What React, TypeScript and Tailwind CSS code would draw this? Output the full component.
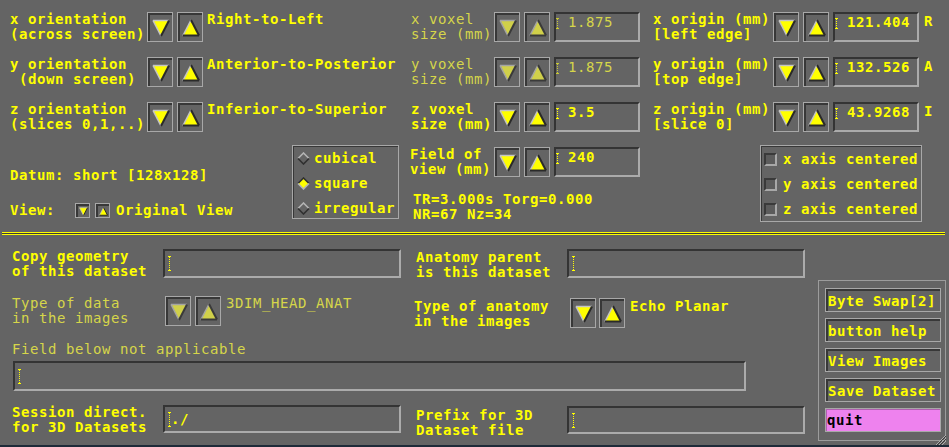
import React from "react";

const YEL = "#ffff00";
const DIM = "font-normal text-[#d6d64a]";

function Tri({ dir, dim = false, size = 18 }: { dir: "up" | "down"; dim?: boolean; size?: number }) {
  const fill = dim ? "#d0d04a" : YEL;
  const light = dim ? "#a4a4a4" : "#c4c4c4";
  const dark = dim ? "#3a3a3a" : "#2a2a2a";
  return (
    <svg width={size} height={size} viewBox="0 0 18 18" className="block">
      {dir === "down" ? (
        <>
          <polygon points="1,1.5 17,1.5 9,17" fill={fill} />
          <line x1="1" y1="1.5" x2="17" y2="1.5" stroke={light} strokeWidth="1.5" />
          <line x1="1" y1="1.5" x2="9" y2="17" stroke={light} strokeWidth="1.5" />
          <line x1="17" y1="1.5" x2="9" y2="17" stroke={dark} strokeWidth="2" />
        </>
      ) : (
        <>
          <polygon points="9,1 17,16.5 1,16.5" fill={fill} />
          <line x1="9" y1="1" x2="1" y2="16.5" stroke={light} strokeWidth="1.5" />
          <line x1="9" y1="1" x2="17" y2="16.5" stroke={dark} strokeWidth="2" />
          <line x1="1" y1="16.5" x2="17" y2="16.5" stroke={dark} strokeWidth="2" />
        </>
      )}
    </svg>
  );
}

function ArrowBtn({ dir, dim = false, small = false }: { dir: "up" | "down"; dim?: boolean; small?: boolean }) {
  return (
    <div
      className={`${small ? "w-[15px] h-[15px]" : "w-[26px] h-[30px]"} shrink-0 border border-[#a8a8a8] bg-[#646464]`}
    >
      <div className="w-full h-full border-t-2 border-l-2 border-[#383838] flex items-center justify-center">
        <Tri dir={dir} dim={dim} size={small ? 9 : 18} />
      </div>
    </div>
  );
}

function Cursor({ h = 11, dim = false }: { h?: number; dim?: boolean }) {
  const c = dim ? "#c8c832" : YEL;
  return (
    <svg width="3" height={h} viewBox={`0 0 3 ${h}`} className="block shrink-0">
      <line x1="0" y1="0.5" x2="3" y2="0.5" stroke={c} strokeWidth="1" />
      <line x1="1.5" y1="1" x2="1.5" y2={h - 1} stroke={c} strokeWidth="1" strokeDasharray="1 1" />
      <line x1="0" y1={h - 0.5} x2="3" y2={h - 0.5} stroke={c} strokeWidth="1" />
    </svg>
  );
}

function NumField({ text, dim = false, w = "w-[86px]" }: { text: string; dim?: boolean; w?: string }) {
  return (
    <div
      className={`${w} h-[30px] shrink-0 border-2 border-t-[#343434] border-l-[#343434] border-b-[#ababab] border-r-[#ababab] flex items-start pt-[1px]`}
    >
      <div className="mt-[3px]">
        <Cursor h={11} dim={dim} />
      </div>
      <span className={`ml-[9px] whitespace-pre ${dim ? DIM : ""}`}>{text}</span>
    </div>
  );
}

function TextField({ text = "", w, h = "h-[29px]" }: { text?: string; w: string; h?: string }) {
  return (
    <div
      className={`${w} ${h} shrink-0 border-2 border-t-[#343434] border-l-[#343434] border-b-[#ababab] border-r-[#ababab] flex items-center pl-[3px]`}
    >
      <Cursor h={15} />
      <span className="whitespace-pre">{text}</span>
    </div>
  );
}

function TopRow(p: {
  a1: string;
  a2: string;
  val: string;
  b1: string;
  b2: string;
  bDim: boolean;
  bVal: string;
  c1: string;
  c2: string;
  cVal: string;
  letter: string;
}) {
  return (
    <div className="h-[45px] shrink-0 flex items-start">
      <div className="ml-[10px] w-[137px] whitespace-pre">
        {p.a1}
        <br />
        {p.a2}
      </div>
      <div className="flex gap-[4px]">
        <ArrowBtn dir="down" />
        <ArrowBtn dir="up" />
      </div>
      <div className="ml-[4px] w-[204px] whitespace-pre">{p.val}</div>
      <div className={`w-[83px] whitespace-pre ${p.bDim ? DIM : ""}`}>
        {p.b1}
        <br />
        {p.b2}
      </div>
      <div className="flex gap-[4px]">
        <ArrowBtn dir="down" dim={p.bDim} />
        <ArrowBtn dir="up" dim={p.bDim} />
      </div>
      <div className="ml-[4px]">
        <NumField text={p.bVal} dim={p.bDim} />
      </div>
      <div className="ml-[13px] w-[120px] whitespace-pre">
        {p.c1}
        <br />
        {p.c2}
      </div>
      <div className="flex gap-[4px]">
        <ArrowBtn dir="down" />
        <ArrowBtn dir="up" />
      </div>
      <div className="ml-[4px]">
        <NumField text={p.cVal} />
      </div>
      <div className="ml-[5px] pt-[2px]">{p.letter}</div>
    </div>
  );
}

function Diamond({ on }: { on: boolean }) {
  const tl = on ? "#303030" : "#b4b4b4";
  const br = on ? "#b4b4b4" : "#303030";
  return (
    <svg width="13" height="13" viewBox="0 0 13 13" className="block shrink-0">
      <polygon points="6.5,1 12,6.5 6.5,12 1,6.5" fill={on ? YEL : "#646464"} />
      <polyline points="1,6.5 6.5,1 12,6.5" fill="none" stroke={tl} strokeWidth="1.6" />
      <polyline points="1,6.5 6.5,12 12,6.5" fill="none" stroke={br} strokeWidth="1.6" />
    </svg>
  );
}

function CheckBox() {
  return (
    <div className="w-[13px] h-[13px] shrink-0 border-2 border-t-[#3a3a3a] border-l-[#3a3a3a] border-b-[#a8a8a8] border-r-[#a8a8a8] bg-[#5c5c5c]" />
  );
}

function PanelBtn({ label, quit = false }: { label: string; quit?: boolean }) {
  return (
    <div className={`w-[116px] h-[24px] shrink-0 border border-[#a8a8a8] ${quit ? "bg-[#ee82ee]" : ""}`}>
      <div
        className={`w-full h-full flex items-center whitespace-pre ${
          quit ? "text-black border-t border-l border-[#b060b0]" : "border-t-2 border-l-2 border-[#383838]"
        }`}
      >
        {label}
      </div>
    </div>
  );
}

export default function App() {
  return (
    <div className="relative w-[949px] h-[447px] overflow-hidden bg-[#646464] text-[#ffff00] font-[family-name:'DejaVu_Sans_Mono','Liberation_Mono',monospace] font-bold text-[14px] tracking-[0.57px] leading-[15px]">
      {/* top rows */}
      <div className="h-[145px] pt-[12px] flex flex-col">
        <TopRow
          a1="x orientation"
          a2="(across screen)"
          val="Right-to-Left"
          b1="x voxel"
          b2="size (mm)"
          bDim
          bVal="1.875"
          c1="x origin (mm)"
          c2="[left edge]"
          cVal="121.404"
          letter="R"
        />
        <TopRow
          a1="y orientation"
          a2=" (down screen)"
          val="Anterior-to-Posterior"
          b1="y voxel"
          b2="size (mm)"
          bDim
          bVal="1.875"
          c1="y origin (mm)"
          c2="[top edge]"
          cVal="132.526"
          letter="A"
        />
        <TopRow
          a1="z orientation"
          a2="(slices 0,1,..)"
          val="Inferior-to-Superior"
          b1="z voxel"
          b2="size (mm)"
          bDim={false}
          bVal="3.5"
          c1="z origin (mm)"
          c2="[slice 0]"
          cVal="43.9268"
          letter="I"
        />
      </div>

      {/* middle */}
      <div className="h-[87px] flex items-start">
        <div className="w-[292px] shrink-0 pl-[10px] pt-[23px] flex flex-col">
          <div className="whitespace-pre">Datum: short [128x128]</div>
          <div className="mt-[20px] flex items-center h-[15px]">
            <span className="w-[65px] shrink-0">View:</span>
            <ArrowBtn small dir="down" />
            <div className="w-[5px]" />
            <ArrowBtn small dir="up" />
            <span className="ml-[6px] whitespace-pre">Original View</span>
          </div>
        </div>
        <div className="w-[107px] h-[74px] shrink-0 border border-[#a8a8a8]">
          <div className="w-full h-full border-t border-l border-[#383838] flex flex-col pt-[4px] pl-[3px] gap-[10px]">
            <div className="h-[15px] flex items-center gap-[4px]">
              <Diamond on={false} />
              <span>cubical</span>
            </div>
            <div className="h-[15px] flex items-center gap-[4px]">
              <Diamond on />
              <span>square</span>
            </div>
            <div className="h-[15px] flex items-center gap-[4px]">
              <Diamond on={false} />
              <span>irregular</span>
            </div>
          </div>
        </div>
        <div className="ml-[11px] mt-[2px] flex flex-col">
          <div className="flex items-start">
            <div className="w-[84px] whitespace-pre">
              Field of
              <br />
              view (mm)
            </div>
            <div className="flex gap-[4px]">
              <ArrowBtn dir="down" />
              <ArrowBtn dir="up" />
            </div>
            <div className="ml-[4px]">
              <NumField text="240" />
            </div>
          </div>
          <div className="mt-[15px] ml-[3px] whitespace-pre">
            TR=3.000s Torg=0.000
            <br />
            NR=67 Nz=34
          </div>
        </div>
        <div className="ml-[120px] w-[162px] h-[77px] shrink-0 border border-[#a8a8a8]">
          <div className="w-full h-full border-t border-l border-[#383838] flex flex-col pt-[5px] pl-[2px] gap-[10px]">
            {["x axis centered", "y axis centered", "z axis centered"].map((t) => (
              <div key={t} className="h-[15px] flex items-center gap-[6px]">
                <CheckBox />
                <span className="whitespace-pre">{t}</span>
              </div>
            ))}
          </div>
        </div>
      </div>

      {/* separator */}
      <div className="h-[5px] ml-[2px] w-[943px] flex flex-col">
        <div className="h-[1px] bg-[#ffff00]" />
        <div className="h-[1px] bg-[#3c3c3c]" />
        <div className="h-[1px] bg-[#ffff00]" />
      </div>

      {/* lower */}
      <div className="h-[208px] flex items-start">
        <div className="w-[812px] shrink-0 flex flex-col">
          <div className="mt-[12px] flex items-start">
            <div className="ml-[12px] w-[151px] whitespace-pre">
              Copy geometry
              <br />
              of this dataset
            </div>
            <TextField w="w-[238px]" />
            <div className="ml-[15px] w-[151px] whitespace-pre mt-[1px]">
              Anatomy parent
              <br />
              is this dataset
            </div>
            <TextField w="w-[238px]" />
          </div>
          <div className="mt-[16px] flex items-start h-[30px]">
            <div className={`ml-[12px] w-[153px] whitespace-pre ${DIM}`}>
              Type of data
              <br />
              in the images
            </div>
            <div className="flex gap-[4px]">
              <ArrowBtn dir="down" dim />
              <ArrowBtn dir="up" dim />
            </div>
            <div className={`ml-[5px] w-[188px] whitespace-pre ${DIM}`}>3DIM_HEAD_ANAT</div>
            <div className="mt-[2px] flex items-start">
              <div className="w-[156px] whitespace-pre pt-[1px]">
                Type of anatomy
                <br />
                in the images
              </div>
              <div className="flex gap-[3px]">
                <ArrowBtn dir="down" />
                <ArrowBtn dir="up" />
              </div>
              <div className="ml-[5px] whitespace-pre pt-[1px]">Echo Planar</div>
            </div>
          </div>
          <div className={`mt-[16px] ml-[12px] whitespace-pre ${DIM}`}>Field below not applicable</div>
          <div className="mt-[4px] ml-[13px]">
            <TextField w="w-[733px]" h="h-[30px]" />
          </div>
          <div className="mt-[14px] flex items-start">
            <div className="ml-[12px] w-[151px] whitespace-pre">
              Session direct.
              <br />
              for 3D Datasets
            </div>
            <TextField w="w-[238px]" h="h-[28px]" text="./" />
            <div className="ml-[15px] w-[151px] whitespace-pre mt-[3px]">
              Prefix for 3D
              <br />
              Dataset file
            </div>
            <div className="mt-[1px]">
              <TextField w="w-[238px]" h="h-[28px]" />
            </div>
          </div>
        </div>
        <div className="ml-[6px] mt-[43px] w-[128px] h-[161px] shrink-0 border border-[#9c9c9c] flex flex-col pt-[7px] pl-[6px] gap-[6px]">
          <PanelBtn label="Byte Swap[2]" />
          <PanelBtn label="button help" />
          <PanelBtn label="View Images" />
          <PanelBtn label="Save Dataset" />
          <PanelBtn label="quit" quit />
        </div>
      </div>

      {/* bottom edge */}
      <div className="h-[2px] bg-[#1e2a38]" />

      {/* resize grip */}
      <svg width="12" height="10" viewBox="0 0 12 10" className="absolute right-[3px] bottom-[2px]">
        <line x1="2" y1="10" x2="12" y2="0" stroke="#b0b0b0" strokeWidth="1" />
        <line x1="5" y1="10" x2="12" y2="3" stroke="#b0b0b0" strokeWidth="1" />
        <line x1="8" y1="10" x2="12" y2="6" stroke="#b0b0b0" strokeWidth="1" />
        <line x1="3" y1="10" x2="12" y2="1" stroke="#3a3a3a" strokeWidth="1" />
        <line x1="6" y1="10" x2="12" y2="4" stroke="#3a3a3a" strokeWidth="1" />
      </svg>
    </div>
  );
}
